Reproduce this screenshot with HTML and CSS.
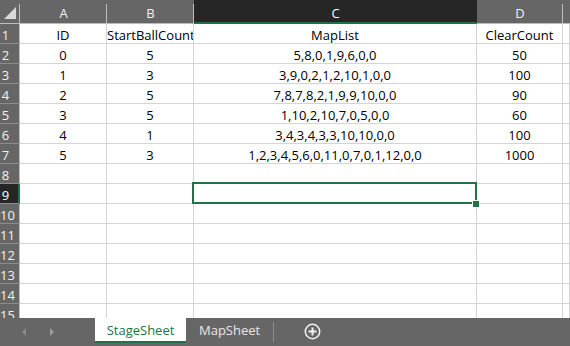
FILE: index.html
```html
<!DOCTYPE html>
<html lang="en">
<head>
    <meta charset="UTF-8">
    <title>StageSheet</title>
    <link rel="stylesheet" href="styles.css">
</head>
<body>
    <div class="app">
        <div class="sheet">
            <div class="corner">
                <svg width="13" height="13" viewBox="0 0 13 13"><polygon points="12,0 12,12 0,12" fill="#d9d9d9"/></svg>
            </div>
            <div class="col-head">A</div>
            <div class="col-head">B</div>
            <div class="col-head selected">C</div>
            <div class="col-head">D</div>
            <div class="col-head last"></div>

            <div class="row-head">1</div>
            <div class="cell">ID</div>
            <div class="cell">StartBallCount</div>
            <div class="cell">MapList</div>
            <div class="cell">ClearCount</div>
            <div class="cell"></div>

            <div class="row-head">2</div>
            <div class="cell">0</div>
            <div class="cell">5</div>
            <div class="cell">5,8,0,1,9,6,0,0</div>
            <div class="cell">50</div>
            <div class="cell"></div>

            <div class="row-head">3</div>
            <div class="cell">1</div>
            <div class="cell">3</div>
            <div class="cell">3,9,0,2,1,2,10,1,0,0</div>
            <div class="cell">100</div>
            <div class="cell"></div>

            <div class="row-head">4</div>
            <div class="cell">2</div>
            <div class="cell">5</div>
            <div class="cell">7,8,7,8,2,1,9,9,10,0,0</div>
            <div class="cell">90</div>
            <div class="cell"></div>

            <div class="row-head">5</div>
            <div class="cell">3</div>
            <div class="cell">5</div>
            <div class="cell">1,10,2,10,7,0,5,0,0</div>
            <div class="cell">60</div>
            <div class="cell"></div>

            <div class="row-head">6</div>
            <div class="cell">4</div>
            <div class="cell">1</div>
            <div class="cell">3,4,3,4,3,3,10,10,0,0</div>
            <div class="cell">100</div>
            <div class="cell"></div>

            <div class="row-head">7</div>
            <div class="cell">5</div>
            <div class="cell">3</div>
            <div class="cell">1,2,3,4,5,6,0,11,0,7,0,1,12,0,0</div>
            <div class="cell">1000</div>
            <div class="cell"></div>

            <div class="row-head">8</div>
            <div class="cell"></div><div class="cell"></div><div class="cell"></div><div class="cell"></div><div class="cell"></div>

            <div class="row-head selected">9</div>
            <div class="cell"></div><div class="cell"></div>
            <div class="cell active"><span class="handle"></span></div>
            <div class="cell"></div><div class="cell"></div>

            <div class="row-head">10</div>
            <div class="cell"></div><div class="cell"></div><div class="cell"></div><div class="cell"></div><div class="cell"></div>

            <div class="row-head">11</div>
            <div class="cell"></div><div class="cell"></div><div class="cell"></div><div class="cell"></div><div class="cell"></div>

            <div class="row-head">12</div>
            <div class="cell"></div><div class="cell"></div><div class="cell"></div><div class="cell"></div><div class="cell"></div>

            <div class="row-head">13</div>
            <div class="cell"></div><div class="cell"></div><div class="cell"></div><div class="cell"></div><div class="cell"></div>

            <div class="row-head">14</div>
            <div class="cell"></div><div class="cell"></div><div class="cell"></div><div class="cell"></div><div class="cell"></div>

            <div class="row-head">15</div>
            <div class="cell"></div><div class="cell"></div><div class="cell"></div><div class="cell"></div><div class="cell"></div>
        </div>

        <div class="tabs">
            <div class="nav">
                <svg class="arrow" width="5" height="8" viewBox="0 0 5 8"><polygon points="4,0 4,8 0,4" fill="#8a8a8a"/></svg>
                <svg class="arrow" width="5" height="8" viewBox="0 0 5 8"><polygon points="1,0 1,8 5,4" fill="#9c9c9c"/></svg>
            </div>
            <div class="tab active">StageSheet</div>
            <div class="tab">MapSheet</div>
            <div class="tab-sep"></div>
            <div class="add">
                <svg width="17" height="17" viewBox="0 0 17 17">
                    <circle cx="8.5" cy="8.5" r="7.2" fill="none" stroke="#f2f2f2" stroke-width="1.5"/>
                    <path d="M8.5 4.5v8M4.5 8.5h8" stroke="#f2f2f2" stroke-width="2"/>
                </svg>
            </div>
        </div>
    </div>
</body>
</html>
```

FILE: styles.css
```css
body {
    margin: 0;
    font-family: "Open Sans", Arial, sans-serif;
    font-size: 13px;
    background: #ffffff;
    overflow: hidden;
}

.app {
    display: flex;
    flex-direction: column;
    width: 570px;
    height: 346px;
}

.sheet {
    flex: 1;
    overflow: hidden;
    display: grid;
    grid-template-columns: 20px 87px 87px 283px 86px 1fr;
    grid-template-rows: 24px;
    grid-auto-rows: 20px;
}

.corner,
.col-head,
.row-head {
    background: #666666;
    color: #f2f2f2;
    box-sizing: border-box;
}

.corner {
    display: flex;
    align-items: flex-end;
    justify-content: flex-end;
    padding: 0 3px 4px 0;
    background: linear-gradient(#bdbdbd, #bdbdbd) right bottom / 1px 20px no-repeat,
                linear-gradient(#bdbdbd, #bdbdbd) left bottom / 100% 1px no-repeat,
                #666666;
}

.corner svg {
    display: block;
}

.col-head {
    text-align: center;
    line-height: 22px;
    padding-top: 2px;
    background: linear-gradient(#bdbdbd, #bdbdbd) right bottom / 1px 20px no-repeat,
                linear-gradient(#bdbdbd, #bdbdbd) left bottom / 100% 1px no-repeat,
                #666666;
}

.col-head.selected {
    background: #262626;
    color: #ffffff;
    box-shadow: inset 0 -2px 0 #217346;
}

.col-head.last {
    background: linear-gradient(#bdbdbd, #bdbdbd) left bottom / 100% 1px no-repeat,
                #666666;
}

.row-head {
    text-align: center;
    padding-right: 8px;
    line-height: 17px;
    padding-top: 3px;
    border-right: 1px solid #bdbdbd;
    border-bottom: 1px solid #8c8c8c;
    white-space: nowrap;
}

.row-head.selected {
    background: #262626;
    color: #ffffff;
    border-right: 1px solid #217346;
    box-shadow: inset -1px 0 0 #217346;
}

.cell {
    position: relative;
    box-sizing: border-box;
    border-right: 1px solid #d4d4d4;
    border-bottom: 1px solid #d4d4d4;
    color: #000000;
    text-align: center;
    white-space: nowrap;
    overflow: hidden;
    line-height: 16px;
    padding-top: 3px;
}

.cell.active {
    overflow: visible;
    z-index: 1;
}

.cell.active::before {
    content: "";
    position: absolute;
    left: -2px;
    top: -2px;
    right: -1px;
    bottom: -1px;
    border: 2px solid #217346;
}

.handle {
    position: absolute;
    right: -3px;
    bottom: -4px;
    width: 6px;
    height: 6px;
    background: #217346;
    box-shadow: -1px -1px 0 #ffffff;
}

.tabs {
    height: 28px;
    flex-shrink: 0;
    display: flex;
    align-items: flex-start;
    background: #666666;
    color: #e6e6e6;
}

.nav {
    width: 95px;
    height: 28px;
    display: flex;
    align-items: center;
    gap: 22px;
    padding-left: 22px;
    box-sizing: border-box;
}

.arrow {
    display: block;
}

.tab {
    height: 25px;
    line-height: 24px;
    padding: 0 13px;
    box-sizing: border-box;
}

.tab.active {
    width: 91px;
    padding: 0;
    text-align: center;
    background: #ffffff;
    color: #217346;
    border-bottom: 2px solid #217346;
}

.tab-sep {
    width: 1px;
    height: 20px;
    margin-top: 4px;
    background: #8e8e8e;
}

.add {
    margin-left: 30px;
    padding-top: 5px;
}

.add svg {
    display: block;
}
```
